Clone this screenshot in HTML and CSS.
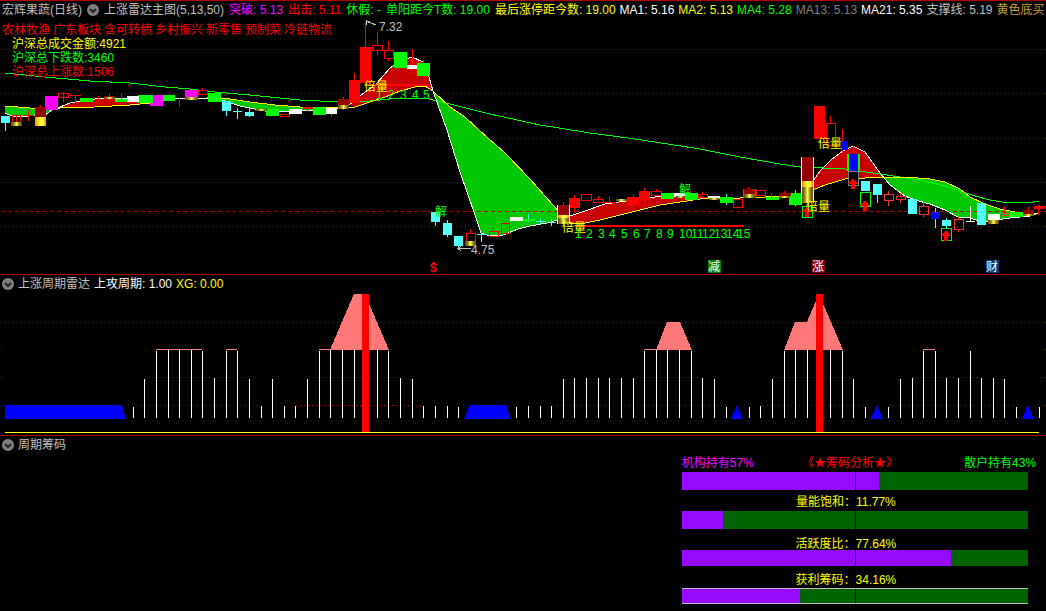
FILE: index.html
```html
<!DOCTYPE html>
<html lang="zh-CN">
<head>
<meta charset="utf-8">
<meta name="viewport" content="width=device-width, initial-scale=1">
<title>宏辉果蔬 - 上涨雷达主图</title>
<link rel="stylesheet" href="styles.css">
</head>
<body>
<main class="terminal">
  <section class="panel">
    <header class="panel-head">
      <div class="head-group">
        <span class="silver">宏辉果蔬(日线)</span>
        <button class="toggle" type="button" aria-label="主图指标菜单"><svg viewBox="0 0 12 12"><circle cx="6" cy="6" r="6"/><path d="M3 5l3 3 3-3"/></svg></button>
        <span class="silver">上涨雷达主图(5,13,50)</span>
        <span class="magenta">突破: 5.13</span>
        <span class="red">出击: 5.11</span>
        <span class="lime">休假: -</span>
        <span class="lime">单阳距今T数: 19.00</span>
        <span class="yellow">最后涨停距今数: 19.00</span>
      </div>
      <span class="white">MA1: 5.16</span>
      <span class="yellow">MA2: 5.13</span>
      <span class="lime">MA4: 5.28</span>
      <span class="gray">MA13: 5.13</span>
      <span class="white">MA21: 5.35</span>
      <span class="silver">支撑线: 5.19</span>
      <span class="gold">黄色底买</span>
    </header>
    <div class="chart">
      <svg class="plot" viewBox="0 19 1046 255" role="img" aria-label="日线主图">
        <defs>
          <linearGradient id="olive"><stop offset="0" stop-color="#5a4a00"/><stop offset=".25" stop-color="#968220"/><stop offset=".5" stop-color="#ffff50"/><stop offset=".75" stop-color="#968220"/><stop offset="1" stop-color="#5a4a00"/></linearGradient>
          <linearGradient id="amber"><stop offset="0" stop-color="#ff9000"/><stop offset=".45" stop-color="#ffff40"/><stop offset=".7" stop-color="#ffff40"/><stop offset="1" stop-color="#ff9000"/></linearGradient>
          <g id="buy"><path class="f-red" d="M0 0l5 6h-3v5h-4v-5h-3z"/></g>
        </defs>
        <path class="dots" d="M1 49.5H1046M1 93.5H1046M1 138.5H1046M1 182.5H1046M1 226.5H1046"/>

        <!-- bands between the two short averages -->
        <path class="band-down" d="M5 106L30 108 60 108 52 110 45 115 28 116 20 117 12 116 5 113z"/>
        <path class="band-up" d="M60 107L80 101 95 99 110 98 175 98 150 103 130 105 95 107z"/>
        <path class="band-down" d="M215 98L230 99 250 102 275 105 300 107 335 108 300 111 265 111 255 109 240 106 225 101z"/>
        <path class="band-up" d="M349 105L360 96 377 83 390 68 400 61 412 57 423 62 429 77 433 91 425 86 415 87 400 91 385 97 370 102 355 107z"/>
        <path class="band-down" d="M433 91L450 107 465 117 479 130 505 153 530 179 553 205 558 209V220L547 223 530 226 518 229 503 235 493 236 481 233 475 215 460 172 447 130z"/>
        <path class="band-up" d="M558 220L570 216 585 211 605 204 640 199 655 197 698 196 720 198 700 199 680 202 660 205 640 210 620 215 600 220 585 223 570 224z"/>
        <path class="band-up" d="M813 181L820 171 831 160 843 151 853 146 865 152 880 174 882 177 865 178 845 179 825 185 813 190z"/>
        <path class="band-down" d="M882 177L905 177 930 179 945 182 960 189 970 197 985 204 1000 209 1015 212 1030 214 1010 218 982 222 970 218 958 217 945 210 930 204 915 200 905 196 890 185z"/>
        <path class="dash" d="M1 211.5H1046"/>

        <path class="s-lime" d="M5 73L45 77 90 81 130 83 165 87 190 89 215 92 250 95 300 100 340 102 360 102 390 99 425 98 450 104 490 114 540 125 590 133 635 139 700 149 740 157 780 164 800 167 845 169 880 174 920 180 945 186 960 191 975 196 990 200 1005 202.500 1030 202.500 1039 201"/>
        <path class="s-yellow" d="M5 106L30 108 60 108 95 107 130 105 150 103 175 99 208 98 230 99 250 102 275 105 300 107 330 108 355 107 370 102 385 97 400 91 415 87 425 86 433 91 450 107 465 117 479 130 505 153 530 179 553 205 570 224 585 223 600 220 620 215 640 210 660 205 680 202 700 199 720 198 740 198 790 196M813 190L825 185 845 179 865 178 880 177 905 177 930 179 945 182 960 189 970 197 985 204 1000 209 1015 212 1039 214"/>
        <path class="s-white" d="M5 113L12 116 20 117 28 116 45 115 52 110 60 107 70 103 80 101 95 99 110 98 185 98 208 98 225 101 240 106 255 109 265 111 300 111 335 109 349 105 360 96 377 83 390 68 400 61 412 57 423 62 429 77 433 91 447 130 460 172 475 215 481 233 487 235 493 236 503 235 518 229 530 226 547 223 558 220 570 216 585 211 605 204 640 199 655 197 698 196M813 181L820 171 831 160 843 151 853 146 865 152 880 173 890 185 905 196 915 200 930 204 945 210 958 217 970 218 982 222 1010 218 1030 216 1039 213"/>

        <!-- wicks -->
        <path class="s-red" d="M16.500 115V122M28.500 110V121M24 115.500H34M40.500 105V108M63.500 92V102M70 95.500H81M75.500 95V102M98.500 96V104M109.500 93V102M121.500 93V99M179.500 98V107M202.500 88V91M307.500 107V112M331.500 114V117M343.500 97V110M354.500 73V80M365.500 22V47M377.500 32V45M377.500 50V55M388.500 41V50M388.500 58V61M412.500 49V74M423.500 60V63M470.500 229V233M493.500 227V231M563.500 202V205M574.500 195V213M598.500 196V199M604 202.500H616M609.500 196V202M633.500 194V208M644.500 188V204M656.500 189V191M690.500 191V193M702.500 192V194M748.500 187V190M771.500 193V197M784.500 191V193M830.500 116V123M842.500 129V155M853.500 146V155M1004.500 206V213M1028.500 207V211M1038.500 205V215"/>
        <path class="s-coral" d="M888.500 191V195M888.500 201V206M900.500 193V197M900.500 200V203M923.500 196V206M923.500 215V217M958.500 217V219M958.500 229V232"/>
        <path class="s-cyan" d="M5.500 116V131M226.500 101V116M237.500 108V119M233 111.500H242M249.500 108V117M435.500 212V226M447.500 220V237M458.500 236V248M477 234.500H486M481.500 233V242M528.500 214V222M536 221.500H546M540.500 219V225M550 222.500H556M551.500 219V226M726.500 194V205M795.500 190V206M877.500 184V203M935.500 208V228M946.500 218V228"/>
        <path class="s-white" d="M970.500 206V222M966 221.500H975"/>

        <!-- hollow bodies -->
        <path class="hollow" d="M12.500 115.500H20.500V122.500H12.500zM58.500 93.500H68.500V97.500H58.500zM198.500 90.500H207.500V94.500H198.500zM280.500 114.500H289.500V116.500H280.500zM372.500 45.500H382.500V50.500H372.500zM384.500 50.500H393.500V58.500H384.500zM466.500 233.500H475.500V241.500H466.500zM489.500 231.500H498.500V236.500H489.500zM501.500 223.500H509.500V233.500H501.500zM581.500 194.500H591.500V200.500H581.500zM593.500 199.500H603.500V202.500H593.500zM651.500 191.500H661.500V195.500H651.500zM698.500 194.500H707.500V197.500H698.500zM733.500 199.500H742.500V207.500H733.500zM756.500 190.500H765.500V195.500H756.500zM826.500 123.500H835.500V145.500H826.500z"/>
        <path class="hollow-coral" d="M884.500 194.500H893.500V200.500H884.500zM896.500 196.500H905.500V199.500H896.500zM919.500 206.500H928.500V214.500H919.500zM954.500 219.500H963.500V229.500H954.500zM1001.500 213.500H1010.500V215.500H1001.500z"/>

        <!-- filled bodies -->
        <path class="f-cyan" d="M1 116h9v7h-9zM222 101h9v10h-9zM245 112h9v4h-9zM431 212h9v10h-9zM443 223h9v12h-9zM454 236h9v10h-9zM861 181h9v10h-9zM873 184h9v11h-9zM908 199h9v15h-9zM942 220h9v6h-9zM977 203h9v22h-9z"/>
        <path class="f-magenta" d="M45 96h13v14h-13zM150 95h13v11h-13zM185 90h13v7h-13z"/>
        <path class="f-lime" d="M80 98h13v4h-13zM115 99h13v3h-13zM138 95h15v8h-15zM163 95h12v6h-12zM208 93h13v9h-13zM266 109h13v7h-13zM313 107h13v8h-13zM394 52h13v16h-13zM417 63h13v13h-13zM522 219h13v2h-13zM661 193h13v6h-13zM685 193h13v7h-13zM720 197h13v6h-13zM766 197h13v3h-13zM789 193h13v12h-13zM1010 212h13v5h-13z"/>
        <path class="f-white" d="M127 96h12v6h-12zM289 109h13v5h-13zM326 108h11v6h-11zM407 65h10v4h-10zM510 217h13v4h-13zM674 193h11v3h-11zM708 196h12v2h-12zM988 214h12v6h-12z"/>
        <path class="f-red" d="M303 107h10v2h-10zM349 80h11v23h-11zM360 47h11v36h-11zM569 198h11v10h-11zM627 197h12v8h-12zM639 191h11v9h-11zM814 106h11v33h-11zM1034 206h11v3h-11zM366 84h65v2h-65zM575 225h169v2h-169z"/>
        <path class="f-maroon" d="M35 107h11v10h-11zM338 99h11v6h-11zM558 205h11v10h-11zM744 189h11v5h-11zM779 193h12v3h-12zM802 157h11v24h-11zM1023 210h11v4h-11zM104 96h11v1h-11z"/>
        <path class="f-blue" d="M841 141h7v9h-7zM849 154h9v17h-9zM931 212h9v7h-9z"/>
        <g class="f-amber"><path d="M35 117h11v9h-11z"/><path d="M558 215h11v3h-11z"/><path d="M802 181h11v6h-11z"/></g>
        <g class="f-olive"><path d="M11 122h11v4h-11z"/><path d="M104 97h11v2h-11z"/><path d="M185 97h13v3h-13z"/><path d="M256 109h11v2h-11z"/><path d="M338 105h11v4h-11z"/><path d="M465 241h11v5h-11z"/><path d="M558 218h11v6h-11z"/><path d="M616 199h11v2h-11z"/><path d="M676 196h9v2h-9z"/><path d="M709 198h10v2h-10z"/><path d="M744 194h11v4h-11z"/><path d="M779 196h11v2h-11z"/><path d="M802 187h11v16h-11z"/><path d="M988 220h11v4h-11z"/><path d="M1023 214h11v2h-11z"/></g>
        <path class="s-white" d="M557.500 205V224M569.500 205V224M801.500 203V157M813.500 157V203"/>
        <path class="s-magenta" d="M743.500 189V198M755.500 189V198"/>
        <path class="s-lime" d="M802.500 206.500H812.500V217.500H802.500zM860.500 192.500H870.500V206.500H860.500zM941.500 228.500H951.500V240.500H941.500z"/>
        <path class="f-lime" d="M847 154h2v17h-2zM858 154h2v17h-2z"/>
        <path class="gray-box" d="M848.500 171.500H858.500V185.500H848.500z"/>
        <use href="#buy" x="807" y="206"/><use href="#buy" x="853" y="178"/><use href="#buy" x="865" y="200"/><use href="#buy" x="946" y="230"/>

        <!-- annotations -->
        <path class="s-silver" d="M366 20V25M366 21H370M366 21L376 25M458 248.500H471M461 246L458 248.500 461 251"/>
        <text class="t-silver" x="379" y="31">7.32</text>
        <text class="t-silver" x="471" y="254">4.75</text>
        <g class="t-yellow"><text x="364" y="91">倍量</text><text x="562" y="232">倍量</text><text x="818" y="148">倍量</text><text x="806" y="211">倍量</text></g>
        <g class="t-lime"><text x="435" y="216">解</text><text x="679" y="194">解</text>
          <text x="376" y="99">1</text><text x="388" y="99">2</text><text x="400" y="99">3</text><text x="412" y="99">4</text><text x="423" y="99">5</text>
          <text x="575" y="238">1</text><text x="586" y="238">2</text><text x="598" y="238">3</text><text x="609" y="238">4</text><text x="621" y="238">5</text><text x="633" y="238">6</text><text x="644" y="238">7</text><text x="656" y="238">8</text><text x="667" y="238">9</text><text x="679" y="238">10</text><text x="691" y="238">11</text><text x="702" y="238">12</text><text x="714" y="238">13</text><text x="726" y="238">14</text><text x="737" y="238">15</text></g>
        <text class="t-red" x="430" y="272">$</text><path class="s-red" d="M431 265L434 262 437 265"/>
        <rect fill="#008000" x="708" y="260" width="13" height="13"/><rect fill="#800000" x="812" y="260" width="13" height="13"/><rect fill="#003c78" x="986" y="260" width="13" height="13"/>
        <g class="t-white"><text x="708" y="271">减</text><text x="812" y="271">涨</text><text x="986" y="271">财</text></g>
      </svg>
      <div class="notes">
        <ul class="tags red"><li>农林牧渔</li><li>广东板块</li><li>含可转债</li><li>乡村振兴</li><li>新零售</li><li>预制菜</li><li>冷链物流</li></ul>
        <p class="stat yellow">沪深总成交金额:4921</p>
        <p class="stat lime">沪深总下跌数:3460</p>
        <p class="stat red">沪深总上涨数:1506</p>
      </div>
    </div>
  </section>

  <section class="panel">
    <header class="panel-head">
      <button class="toggle" type="button" aria-label="上涨周期雷达菜单"><svg viewBox="0 0 12 12"><circle cx="6" cy="6" r="6"/><path d="M3 5l3 3 3-3"/></svg></button>
      <span class="silver">上涨周期雷达</span>
      <span class="white">上攻周期: 1.00</span>
      <span class="yellow">XG: 0.00</span>
    </header>
    <svg class="plot" viewBox="0 293 1046 142" role="img" aria-label="上涨周期雷达">
      <path class="dots" d="M1 322.500H1046M1 349.500H2M1041 349.500H1046M1 377.500H2M145 377.500H249M309 377.500H400M637 377.500H703M773 377.500H852M913 377.500H981M1041 377.500H1046M1 405.500H2M137 405.500H261M296 405.500H423M553 405.500H727M763 405.500H864M889 405.500H1016M1041 405.500H1046"/>
      <path class="s-white" d="M133.500 407V418M144.500 379V418M156.500 351V418M168.500 350V418M179.500 350V418M191.500 350V418M202.500 351V418M214.500 378V418M226.500 351V418M237.500 351V418M249.500 379V418M261.500 406V418M272.500 379V418M284.500 406V418M295.500 406V418M307.500 379V418M319.500 351V418M330.500 350V418M342.500 350V418M354.500 350V418M377.500 350V418M388.500 351V418M400.500 378V418M412.500 379V418M423.500 406V418M435.500 406V418M447.500 406V418M458.500 407V418M516.500 407V418M528.500 406V418M540.500 406V418M551.500 406V418M563.500 379V418M574.500 378V418M586.500 378V418M598.500 378V418M609.500 378V418M621.500 378V418M633.500 378V418M644.500 351V418M656.500 350V418M667.500 350V418M679.500 350V418M691.500 351V418M702.500 378V418M714.500 379V418M726.500 407V418M749.500 407V418M760.500 406V418M772.500 379V418M784.500 351V418M795.500 350V418M807.500 350V418M830.500 350V418M842.500 351V418M853.500 379V418M865.500 407V418M888.500 407V418M900.500 379V418M912.500 378V418M923.500 351V418M935.500 351V418M946.500 378V418M958.500 378V418M970.500 351V418M981.500 378V418M993.500 378V418M1004.500 379V418M1016.500 407V418M1039.500 407V418"/>
      <path class="f-pink" d="M156 349h46v1h-46zM226 349h11v1h-11zM319 349h12v1h-12zM644 349h12v1h-12zM923 349h12v1h-12zM330 350L354 294H365L389 350zM656 350L667 322H680L692 350zM784 350L795 322H807L819 294 843 350z"/>
      <path class="f-blue" d="M5 405H122L126 419H5zM464 419L470 405H506L511 419zM731 419L737 405 743 419zM871 419L877 405 883 419zM1022 419L1028 405 1034 419z"/>
      <path class="s-yellow" d="M5 432.500H1039"/>
      <path class="f-red" d="M362 294h7v138h-7zM816 294h7v138h-7z"/>
    </svg>
  </section>

  <section class="panel">
    <header class="panel-head">
      <button class="toggle" type="button" aria-label="周期筹码菜单"><svg viewBox="0 0 12 12"><circle cx="6" cy="6" r="6"/><path d="M3 5l3 3 3-3"/></svg></button>
      <span class="silver">周期筹码</span>
    </header>
    <div class="chips">
      <div class="chips-head"><span class="magenta">机构持有57%</span><span class="chips-title red">《★筹码分析★》</span><span class="lime">散户持有43%</span></div>
      <div class="bar"><div class="fill" style="width:57%"></div></div>
      <p class="caption">量能饱和：11.77%</p>
      <div class="bar"><div class="fill" style="width:11.77%"></div></div>
      <p class="caption caption-low">活跃度比：77.64%</p>
      <div class="bar bar-slim"><div class="fill" style="width:77.64%"></div></div>
      <p class="caption caption-tall">获利筹码：34.16%</p>
      <div class="bar bar-slim bar-lined"><div class="fill" style="width:34.16%"></div></div>
    </div>
  </section>
</main>
</body>
</html>
```
FILE: styles.css
```css
* { box-sizing: border-box; }
body {
  margin: 0;
  background: #000;
  color: #c0c0c0;
  font: 12px/14px "Liberation Sans", "Noto Sans CJK SC", sans-serif;
}
p, ul { margin: 0; padding: 0; }

.silver { color: #c0c0c0; }
.magenta { color: #f0f; }
.red { color: #f00; }
.lime { color: #0f0; }
.yellow { color: #ff0; }
.white { color: #fff; }
.gray { color: #808080; }
.gold { color: #c8a032; }

.terminal { overflow: hidden; }
.panel { border-top: 1px solid #b00000; }
.panel-head {
  display: flex;
  align-items: center;
  gap: 4px;
  height: 18px;
  padding-left: 2px;
  overflow: hidden;
  white-space: nowrap;
}
.panel-head > * { flex: none; }
.head-group {
  display: flex;
  align-items: center;
  gap: 5px;
}
.toggle {
  width: 12px;
  height: 12px;
  padding: 0;
  border: 0;
  background: none;
  cursor: pointer;
}
.toggle svg { display: block; width: 12px; height: 12px; }
.toggle circle { fill: #808080; }
.toggle path { fill: none; stroke: #202020; stroke-width: 2; }

.chart { position: relative; }
.plot { display: block; width: 100%; height: auto; shape-rendering: crispEdges; }
.notes { position: absolute; top: 4px; left: 2px; }
.tags { display: flex; gap: 3px; list-style: none; }
.stat { padding-left: 10px; }

.plot path { stroke-width: 1; }
.dots { fill: none; stroke: #b00000; stroke-dasharray: 1 3; }
.dash { fill: none; stroke: #b00000; stroke-dasharray: 4 3; }
.band-up { fill: #c80000; }
.band-down { fill: #00c800; }
.s-lime, .s-yellow, .s-white, .s-red, .s-coral, .s-cyan, .s-magenta, .s-silver { fill: none; }
.s-lime { stroke: #0f0; }
.s-yellow { stroke: #ff0; }
.s-white { stroke: #fff; }
.s-red { stroke: #f00; }
.s-coral { stroke: #ff3232; }
.s-cyan { stroke: #54ffff; }
.s-magenta { stroke: #f0f; }
.s-silver { stroke: #c0c0c0; }
.hollow { fill: none; stroke: #f00; }
.hollow-coral { fill: none; stroke: #ff3232; }
.gray-box { fill: #000; stroke: #808080; }
.f-cyan { fill: #54ffff; }
.f-magenta { fill: #f0f; }
.f-lime { fill: #0f0; }
.f-white { fill: #fff; }
.f-red { fill: #f00; }
.f-maroon { fill: #960000; }
.f-blue { fill: #00f; }
.f-pink { fill: #ff7878; }
.f-amber { fill: url(#amber); }
.f-olive { fill: url(#olive); }
.t-silver { fill: #c0c0c0; }
.t-yellow { fill: #ff0; }
.t-lime { fill: #0f0; }
.t-red { fill: #f00; font-weight: bold; }
.t-white { fill: #fff; }

.chips {
  width: 33.1%;
  margin-left: auto;
  margin-right: 18px;
  padding: 2px 0 7px;
}
.chips-head {
  display: flex;
  justify-content: space-between;
  height: 16px;
  margin-right: -8px;
  white-space: nowrap;
}
.chips-title { padding-right: 18px; }
.caption {
  display: flex;
  align-items: center;
  justify-content: center;
  height: 21px;
  padding-top: 3px;
  padding-right: 18px;
  color: #ff0;
}
.caption-low { padding-top: 8px; }
.caption-tall { height: 22px; padding-top: 6px; }
.bar {
  position: relative;
  height: 18px;
  background: #006400;
}
.bar::after {
  content: "";
  position: absolute;
  top: 0;
  bottom: 0;
  left: 50%;
  width: 1px;
  background: #000;
}
.bar-slim { height: 16px; }
.bar-lined { border-top: 1px solid #c0c0c0; border-bottom: 1px solid #c0c0c0; }
.fill { height: 100%; background: #960aff; }
```
